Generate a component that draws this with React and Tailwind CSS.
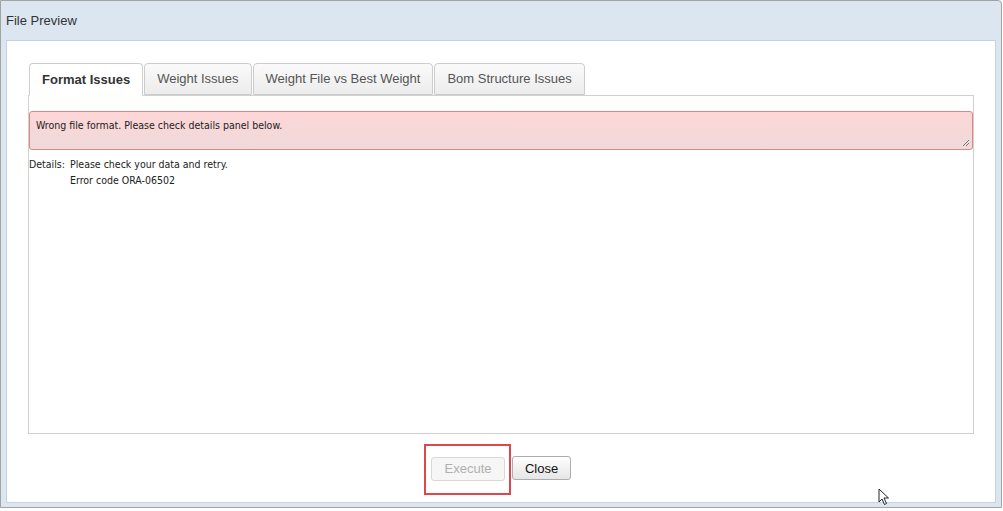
import React from 'react';

const tabs = ['Format Issues', 'Weight Issues', 'Weight File vs Best Weight', 'Bom Structure Issues'];

const App = () => {
  return (
    <div className="w-[1003px] h-[511px] bg-white" style={{ fontFamily: '"Liberation Sans", Arial, sans-serif' }}>
      <div className="w-[1002px] h-[508px] border border-[#a3a3a3] rounded-tr-[4px] bg-[#dbe6f0] flex flex-col relative">
        {/* title bar */}
        <div className="h-[39px] flex items-center pl-[5px] pt-px text-[13px] text-[#333]">File Preview</div>

        {/* body */}
        <div className="mx-[5px] h-[463px] bg-white border border-[#c6d4e2] flex flex-col">
          <div className="mx-[21px] mt-[22px] flex flex-col">
            <div className="flex gap-[1px] pl-px">
              {tabs.map((t, i) => (
                <div
                  key={t}
                  className={
                    i === 0
                      ? 'h-[33px] px-[12px] flex items-center border border-[#ccc] border-b-white rounded-t-[4px] bg-white text-[13px] font-bold text-[#333] -mb-px z-10'
                      : 'h-[32px] px-[12px] flex items-center border border-[#ccc] rounded-t-[4px] bg-gradient-to-b from-[#fafafa] to-[#ececec] text-[13px] text-[#555]'
                  }
                >
                  {t}
                </div>
              ))}
            </div>
            <div className="h-[339px] border border-[#d0d0d0] pt-[15px]">
              <div className="relative h-[39px] border border-[#e08686] rounded-[3px] bg-gradient-to-b from-[#fdd6d7] to-[#efdada] pl-[6px] pt-[6px] text-[10.5px] text-[#222]" style={{ fontFamily: '"DejaVu Sans Condensed", "Liberation Sans", sans-serif' }}>
                Wrong file format. Please check details panel below.
                <svg className="absolute right-[2px] bottom-[2px]" width="8" height="8" viewBox="0 0 8 8">
                  <path d="M7 1 L1 7 M7 4 L4 7" stroke="#777" strokeWidth="1" />
                </svg>
              </div>
              <div className="flex mt-[6px] text-[10.5px] text-[#222] leading-[16px]" style={{ fontFamily: '"DejaVu Sans Condensed", "Liberation Sans", sans-serif' }}>
                <div className="w-[41px]">Details:</div>
                <div>
                  <div>Please check your data and retry.</div>
                  <div>Error code ORA-06502</div>
                </div>
              </div>
            </div>
          </div>

          {/* footer buttons */}
          <div className="flex justify-center items-center gap-[7px] mt-[22px]">
            <div className="relative">
              <button className="h-[24px] w-[74px] border border-[#d8d8d8] rounded-[3px] bg-[#f6f6f6] text-[13px] text-[#b0b0b0]">Execute</button>
              <div className="absolute -left-[7px] -right-[6px] -top-[12px] -bottom-[14px] border-2 border-[#e0474c] pointer-events-none" />
            </div>
            <button className="h-[24px] w-[59px] border border-[#adadad] rounded-[3px] bg-gradient-to-b from-[#fefefe] to-[#e6e6e6] text-[13px] text-[#111]">Close</button>
          </div>
        </div>

        {/* mouse cursor */}
        <svg className="absolute left-[877px] top-[487px]" width="12" height="18" viewBox="0 0 12 18">
          <path d="M1 1 L1 14 L4 11 L6.5 16.5 L8.5 15.5 L6 10 L10.5 10 Z" fill="white" stroke="#222" strokeWidth="1" strokeLinejoin="round" />
        </svg>
      </div>
    </div>
  );
};

export default App;
